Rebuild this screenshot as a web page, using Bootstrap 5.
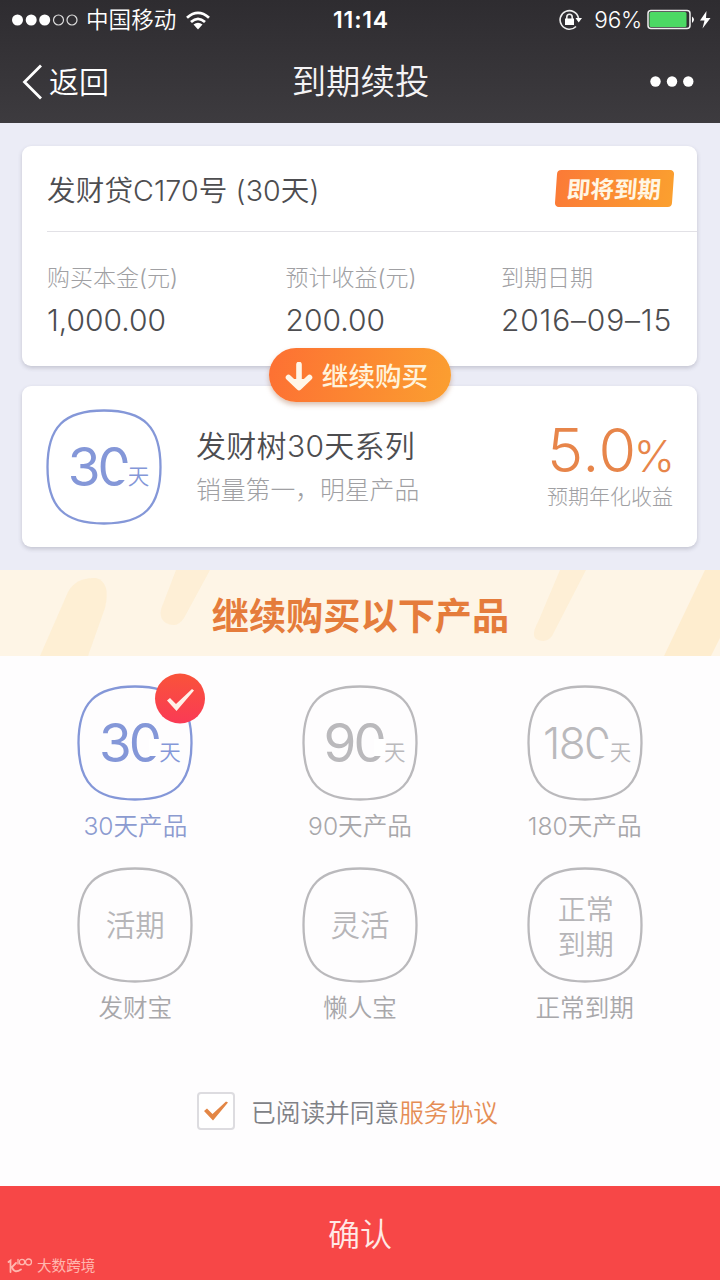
<!DOCTYPE html>
<html lang="zh-CN">
<head>
<meta charset="utf-8">
<meta name="viewport" content="width=device-width, initial-scale=1">
<title>到期续投</title>
<link rel="stylesheet" href="https://cdn.jsdelivr.net/npm/bootstrap@5.3.0/dist/css/bootstrap.min.css">
<style>
  body{font-family:Inter,"Noto Sans CJK SC",sans-serif;font-weight:350;line-height:1;color:#4d4d50;background:#fefdfe;min-height:1280px}
  svg{display:block;flex:none}
  .topbar{height:123px;background:linear-gradient(#2e2c30,#3d3b3f);color:#fff}
  .status{height:40px;font-size:22.6px;font-weight:350;display:grid;grid-template-columns:1fr auto 1fr;padding:0 8px 0 12px}
  .status .clock{font-weight:600;font-size:23px;letter-spacing:.8px;margin-right:2px}
  .titlebar{height:83px;display:grid;grid-template-columns:1fr auto 1fr;padding:0 26px 0 22px;font-weight:350}
  .back{color:#fff;font-size:30px;gap:6px}
  .title{font-size:34.4px;font-weight:350;color:#f4f3f5;padding:2px 0 0 5px}
  .hero{height:447px;background:#ebecf6;padding:23px 23px 23px 22px}
  .panel{background:#fff;border:0;border-radius:9px;box-shadow:0 2px 4px rgba(70,70,90,.24)}
  .holding{height:220px;margin-bottom:20px}
  .holding-head{height:86px;margin-left:25px;border-bottom:1px solid #e2e1e6;padding-right:24px}
  .holding-name{font-size:28.6px;padding-top:6px;letter-spacing:.1px}
  .tag{width:117px;height:37px;font-size:23.5px;font-weight:700;color:#fff6e4;position:relative;z-index:0}
  .tag::before{content:"";position:absolute;inset:0;z-index:-1;border-radius:4px;transform:skewX(-4deg);background:linear-gradient(100deg,#fb7a37,#fba02f)}
  .tag span{transform:skewX(-5deg);padding:2px 2px 0 0}
  .facts{padding:31px 24px 0 25px}
  .muted{color:#a0a0a3;font-weight:300}
  .fact .muted{font-size:23px;line-height:30px}
  .fact .num{font-size:30px;line-height:36px;margin-top:9px;font-weight:320}
  .f1{width:238.500px}.f2{width:215.500px}
  .date{letter-spacing:.8px}
  .again{position:absolute;left:247px;top:202px;width:182px;height:54px;border-radius:27px;background:linear-gradient(100deg,#fd7033,#fb9f30);box-shadow:0 3px 5px rgba(150,80,40,.35);color:#fff3dc;font-size:26.6px;font-weight:500;gap:9px;z-index:2;padding:3px 7px 0 0!important}
  .again:hover{color:#fff3dc}
  .series{height:161px;padding:0 24px}
  .glyph{width:116px;height:116px;position:relative;color:#bab9bc}
  .glyph>svg{position:absolute;inset:0}
  .glyph .days{position:relative;font-weight:380;height:52px;padding-left:9px}
  .glyph .digits{position:relative;font-size:53px;line-height:52px;letter-spacing:-3px}
  .glyph .digits::after{content:"";position:absolute;right:-1px;top:22px;width:11px;height:17px;background:#fff}
  .glyph .days.three{padding-left:5px}
  .glyph .three .digits{font-size:44px;font-weight:350;letter-spacing:-1.600px}
  .glyph .unit{font-size:21.5px;line-height:20px;height:20px;font-weight:350;margin-top:18px}
  .glyph.blue{color:#8497d8}
  .glyph .words{position:relative;font-size:29.5px;line-height:35px;text-align:center;color:#b6b5b8;top:1px}
  .glyph .words.two{font-size:28px;top:3px;left:1px}
  .series-name{font-size:30px;line-height:36px;letter-spacing:.3px}
  .series-note{font-size:24.8px;line-height:32px;margin-top:10px}
  .rate{color:#e7854a;line-height:50px;margin-right:-2px}
  .rate b{font-weight:290;font-size:61px;letter-spacing:.6px}
  .rate i{font-style:normal;font-weight:290;font-size:44px;margin-left:-3px}
  .rate-note{font-size:21px;line-height:28px;margin-top:-8px}
  .rate-wrap{padding-top:2px}
  .banner{height:86px;background:#fef5e6;position:relative;overflow:hidden}
  .banner svg{position:absolute;inset:0}
  .banner h2{position:relative;font-size:37.2px;font-weight:700;color:#e57c3b;margin:0 0 0 1px;padding-top:8px}
  .products{padding:29px 23px 0;display:grid;grid-template-columns:repeat(3,1fr);row-gap:25px}
  .product{height:157px}
  .product .name{font-size:24.6px;line-height:32px;margin-top:10px;color:#a8a7aa;white-space:nowrap}
  .product.on .name{color:#8c9bd0}
  .tick{position:absolute;left:77px;top:-12px;width:51px;height:51px}
  .agree{height:38px;margin-top:68px;padding-left:197px;gap:16px;font-size:24.7px;color:#808186}
  .agree .box{width:38px;height:38px;border:2px solid #dddce0;border-radius:4px;background:#fff}
  .agree a{color:#e58d55;text-decoration:none}
  .confirm{height:94px;margin-top:56px;background:#f74747;color:#ffe9e6;border:0;border-radius:0;font-size:32px;font-weight:350;position:relative}
  .confirm:hover{background:#f74747;color:#ffe9e6}
  .confirm .mark-logo{position:absolute;left:7px;top:70px;gap:4px;font-size:14.6px;color:#ffb7af;font-weight:400}
</style>
</head>
<body>
<svg width="0" height="0" class="position-absolute">
  <symbol id="squircle" viewBox="0 0 116 116"><path d="M58 1.500C98 1.500 114.500 18 114.500 58S98 114.500 58 114.500 1.500 98 1.500 58 18 1.500 58 1.500Z" fill="none" stroke="currentColor" stroke-width="2.300"/></symbol>
</svg>

<header class="topbar">
  <div class="status align-items-center">
    <div class="d-flex align-items-center">
      <svg width="66" height="14" viewBox="0 0 66 14"><g fill="#fff"><circle cx="5.500" cy="7" r="5.500"/><circle cx="19.200" cy="7" r="5.500"/><circle cx="32.700" cy="7" r="5.500"/></g><g fill="none" stroke="#ddd" stroke-width="1.200"><circle cx="46.500" cy="7" r="5"/><circle cx="60" cy="7" r="5"/></g></svg>
      <span class="ms-2">中国移动</span>
      <svg style="margin-left:9px" width="26" height="19" viewBox="0 0 26 19"><g fill="none" stroke="#fff" stroke-width="2.800"><path d="M2 6.800Q13-3 24 6.800"/><path d="M6 11Q13 4.800 20 11"/></g><path d="M8.500 13.500Q13 10 17.500 13.500L13 18.500Z" fill="#fff"/></svg>
    </div>
    <div class="clock">11:14</div>
    <div class="d-flex align-items-center justify-content-end">
      <svg width="24" height="22" viewBox="0 0 24 22"><g fill="none" stroke="#eee" stroke-width="1.600"><path d="M19.500 9A9.300 9.300 0 1 0 17 17.500"/><path d="M7.800 10V8a2.700 2.700 0 0 1 5.400 0v2"/></g><path d="M6 9.500h9v6.500H6ZM16.500 9H23l-3.300 4.500Z" fill="#fff"/></svg>
      <span style="margin:0 5px 0 11px;letter-spacing:-.2px">96%</span>
      <svg width="65" height="22" viewBox="0 0 65 22"><rect x="1" y="1.500" width="42" height="18" rx="3" fill="none" stroke="#eee" stroke-width="1.500"/><rect x="2.500" y="3" width="37" height="15" rx="1.500" fill="#4cd964"/><path d="M45 7.500q4 3 0 6.500Z" fill="#fff"/><path d="M59.500 2 53 11.500h4.500L55.500 19.500 63.500 9H59Z" fill="#fff"/></svg>
    </div>
  </div>
  <nav class="titlebar align-items-center">
    <a class="back d-flex align-items-center text-decoration-none" href="#"><svg width="21" height="36" viewBox="0 0 21 36"><path d="M19 1.500 2.500 18 19 34.500" fill="none" stroke="#fff" stroke-width="2.800"/></svg>返回</a>
    <div class="title">到期续投</div>
    <svg class="ms-auto" width="44" height="12" viewBox="0 0 44 12" fill="#fff"><circle cx="5.500" cy="5.500" r="5.200"/><circle cx="22" cy="5.500" r="5.200"/><circle cx="38.300" cy="5.500" r="5.200"/></svg>
  </nav>
</header>

<main>
  <section class="hero">
    <div class="panel holding position-relative">
      <div class="holding-head d-flex align-items-center justify-content-between">
        <div class="holding-name">发财贷C170号 (30天)</div>
        <div class="tag d-flex align-items-center justify-content-center"><span>即将到期</span></div>
      </div>
      <div class="facts d-flex">
        <div class="fact f1"><div class="muted">购买本金(元)</div><div class="num">1,000.00</div></div>
        <div class="fact f2"><div class="muted">预计收益(元)</div><div class="num">200.00</div></div>
        <div class="fact text-nowrap"><div class="muted">到期日期</div><div class="num date">2016–09–15</div></div>
      </div>
      <button class="again btn border-0 d-flex align-items-center justify-content-center"><svg width="28" height="30" viewBox="0 0 28 30"><path d="M14 2.500V24M3.500 15.500 14 25.500 24.500 15.500" fill="none" stroke="#fff6e8" stroke-width="5.600" stroke-linecap="round" stroke-linejoin="round"/><path d="M7 17h14l-7 8Z" fill="#fff6e8"/></svg>继续购买</button>
    </div>
    <div class="panel series d-flex align-items-center">
      <div class="glyph blue d-flex align-items-center justify-content-center"><svg width="116" height="116"><use href="#squircle"/></svg><div class="days d-flex align-items-center"><span class="digits">30</span><span class="unit">天</span></div></div>
      <div style="margin-left:34px"><div class="series-name">发财树30天系列</div><div class="series-note muted">销量第一，明星产品</div></div>
      <div class="ms-auto text-end rate-wrap"><div class="rate"><b>5.0</b><i>%</i></div><div class="rate-note muted">预期年化收益</div></div>
    </div>
  </section>

  <section class="banner d-flex align-items-center justify-content-center">
    <svg width="720" height="86" viewBox="0 0 720 86"><g fill="#feedcf"><path d="M40 86 68 22Q76 7 96 8 111 12 105 38L88 86Z" opacity=".8"/><path d="M176 0h34L184 48Q177 59 166 53 157 47 163 34Z" opacity=".7"/><path d="M560 0h26L552 66Q546 74 536 69 531 65 538 52Z" opacity=".7"/><path d="M705 0h15V68L711 86H664Z"/></g></svg>
    <h2>继续购买以下产品</h2>
  </section>

  <section class="products">
    <div class="product on d-flex flex-column align-items-center"><div class="glyph blue d-flex align-items-center justify-content-center"><svg width="116" height="116"><use href="#squircle"/></svg><div class="days d-flex align-items-center"><span class="digits">30</span><span class="unit">天</span></div>
      <div class="tick"><svg width="51" height="51" viewBox="0 0 51 51"><defs><linearGradient id="red" x1="0" y1="0" x2="0" y2="1"><stop stop-color="#f9533a"/><stop offset="1" stop-color="#fa3a55"/></linearGradient></defs><circle cx="26" cy="25.500" r="25" fill="url(#red)"/><path d="M13 27.500 16 25 22 31 38 16 40 17.500 22.500 38Z" fill="#fff0e8"/></svg></div></div><div class="name">30天产品</div></div>
    <div class="product d-flex flex-column align-items-center"><div class="glyph d-flex align-items-center justify-content-center"><svg width="116" height="116"><use href="#squircle"/></svg><div class="days d-flex align-items-center"><span class="digits">90</span><span class="unit">天</span></div></div><div class="name">90天产品</div></div>
    <div class="product d-flex flex-column align-items-center"><div class="glyph d-flex align-items-center justify-content-center"><svg width="116" height="116"><use href="#squircle"/></svg><div class="days three d-flex align-items-center"><span class="digits">180</span><span class="unit">天</span></div></div><div class="name">180天产品</div></div>
    <div class="product d-flex flex-column align-items-center"><div class="glyph d-flex align-items-center justify-content-center"><svg width="116" height="116"><use href="#squircle"/></svg><div class="words">活期</div></div><div class="name">发财宝</div></div>
    <div class="product d-flex flex-column align-items-center"><div class="glyph d-flex align-items-center justify-content-center"><svg width="116" height="116"><use href="#squircle"/></svg><div class="words">灵活</div></div><div class="name">懒人宝</div></div>
    <div class="product d-flex flex-column align-items-center"><div class="glyph d-flex align-items-center justify-content-center"><svg width="116" height="116"><use href="#squircle"/></svg><div class="words two">正常<br>到期</div></div><div class="name">正常到期</div></div>
  </section>

  <div class="agree d-flex align-items-center">
    <div class="box d-flex align-items-center justify-content-center"><svg width="26" height="22" viewBox="0 0 26 22"><path d="M1 11 4 8.500 9.500 14 23 1.500 25 2.500 10 20.500Z" fill="#e38645"/></svg></div>
    <div class="pt-1">已阅读并同意<a href="#">服务协议</a></div>
  </div>
</main>

<button class="confirm btn w-100 d-flex align-items-center justify-content-center p-0"><span class="pt-1">确认</span>
  <span class="mark-logo d-flex align-items-center"><svg width="26" height="18" viewBox="0 0 26 18"><g fill="none" stroke="#ffb7af" stroke-width="1.800" stroke-linecap="round"><path d="M1.500 4 3.500 2.500V14M9 5 5 9Q7 16 14 11.500"/><path d="M11 1.500V6" stroke-width="1.300"/><circle cx="15" cy="4" r="2.700" stroke-width="1.300"/><circle cx="21.500" cy="4" r="3" stroke-width="1.300"/></g></svg>大数跨境</span>
</button>
<script src="https://cdn.jsdelivr.net/npm/bootstrap@5.3.0/dist/js/bootstrap.bundle.min.js"></script>
</body>
</html>
